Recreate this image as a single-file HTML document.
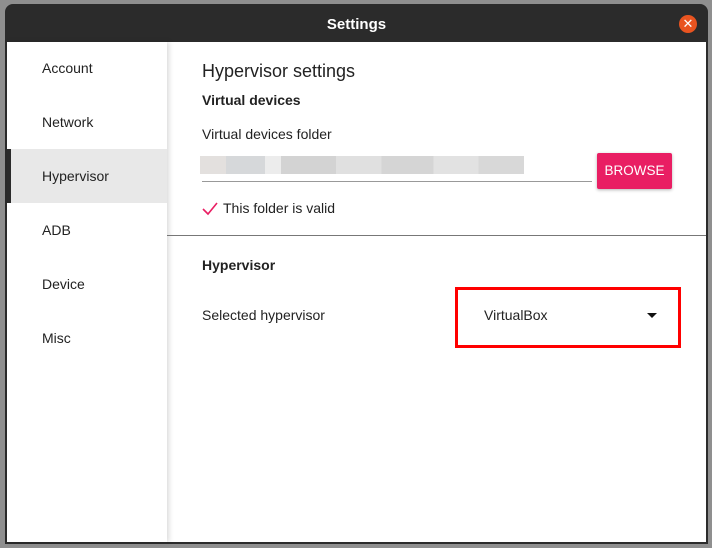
<!DOCTYPE html>
<html><head><style>
*{margin:0;padding:0;box-sizing:border-box}
body{width:712px;height:548px;background:#8f8f8f;font-family:"Liberation Sans",sans-serif;position:relative;overflow:hidden}
.win{position:absolute;left:5px;top:4px;width:703px;height:540px;background:#2b2b2b;border-radius:8px 8px 0 0;border:1px solid #2b2b2b}
.title{position:absolute;left:0;right:0;top:1px;height:37px;color:#fff;font-weight:bold;font-size:15px;text-align:center;line-height:38px}
.close{position:absolute;right:10px;top:10px;width:18px;height:18px;border-radius:50%;background:#e95420;color:#fff;font-size:13px;text-align:center;line-height:18px}
.content{position:absolute;left:1px;top:37px;width:699px;height:500px;background:#fff}
.side{position:absolute;left:0;top:0;width:160px;height:500px;background:#fff;box-shadow:2px 0 5px rgba(0,0,0,.15)}
.item{height:54px;line-height:54px;padding-left:35px;font-size:14px;color:#222}
.item.first{height:53px;line-height:52px}
.item.sel{background:#e8e8e8;border-left:4px solid #2b2b2b;padding-left:31px}
.t{position:absolute;color:#222;font-size:14px}
</style></head><body>
<div class="win">
<div class="title">Settings</div>
<div class="close">✕</div>
<div class="content">
<div class="side">
<div class="item first">Account</div>
<div class="item">Network</div>
<div class="item sel">Hypervisor</div>
<div class="item">ADB</div>
<div class="item">Device</div>
<div class="item">Misc</div>
</div>
<div class="t" style="left:195px;top:19px;font-size:18px">Hypervisor settings</div>
<div class="t" style="left:195px;top:50px;font-weight:bold">Virtual devices</div>
<div class="t" style="left:195px;top:84px">Virtual devices folder</div>
<div style="position:absolute;left:193px;top:114px;width:324px;height:18px;background:linear-gradient(90deg,#e3e0de 0 8%,#d6d8da 8% 20%,#ececec 20% 25%,#d3d3d3 25% 42%,#e0e0e0 42% 56%,#d5d5d5 56% 72%,#e2e2e2 72% 86%,#d8d8d8 86% 100%)"></div>
<div style="position:absolute;left:195px;top:139px;width:390px;height:1px;background:#999"></div>
<div style="position:absolute;left:590px;top:111px;width:75px;height:36px;background:#e91e63;color:#fff;font-size:13.5px;line-height:36px;text-align:center;border-radius:2px;box-shadow:0 1px 3px rgba(0,0,0,.3)">BROWSE</div>
<svg style="position:absolute;left:195px;top:160px" width="16" height="14"><path d="M1 7 L6 12 L15 1" fill="none" stroke="#e91e63" stroke-width="1.6"/></svg>
<div class="t" style="left:216px;top:158px">This folder is valid</div>
<div style="position:absolute;left:160px;top:193px;width:539px;height:1px;background:#777"></div>
<div class="t" style="left:195px;top:215px;font-weight:bold">Hypervisor</div>
<div class="t" style="left:195px;top:265px">Selected hypervisor</div>
<div style="position:absolute;left:448px;top:245px;width:226px;height:61px;border:3px solid #f00"></div>
<div class="t" style="left:477px;top:265px">VirtualBox</div>
<div style="position:absolute;left:640px;top:271px;width:0;height:0;border-left:5px solid transparent;border-right:5px solid transparent;border-top:5px solid #111"></div>
</div>
</div>
</body></html>
